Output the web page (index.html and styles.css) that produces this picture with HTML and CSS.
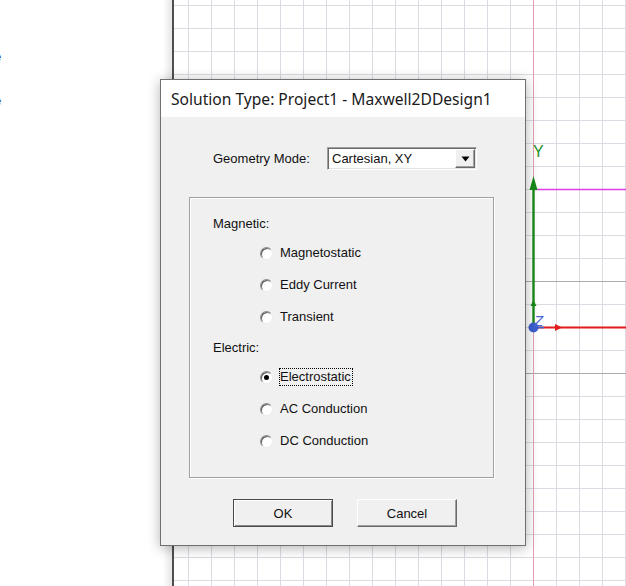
FILE: index.html
```html
<!DOCTYPE html>
<html lang="en">
<head>
<meta charset="utf-8">
<title>Solution Type</title>
<link rel="stylesheet" href="styles.css">
</head>
<body>
<div class="screen">
  <aside class="side">
    <div class="side-item">e</div>
    <div class="side-item">e</div>
  </aside>
  <main class="canvas">
    <svg class="axes" viewBox="174 0 452 586" width="452" height="586">
      <line x1="174" y1="281.5" x2="626" y2="281.5" stroke="#ababab" stroke-width="1"/>
      <line x1="174" y1="373.5" x2="626" y2="373.5" stroke="#ababab" stroke-width="1"/>
      <line x1="533.5" y1="0" x2="533.5" y2="586" stroke="#e4a0b2" stroke-width="1"/>
      <line x1="534" y1="189.5" x2="626" y2="189.5" stroke="#e03ce6" stroke-width="1.3"/>
      <line x1="533.5" y1="186" x2="533.5" y2="327" stroke="#178a17" stroke-width="2.4"/>
      <polygon points="533.5,176 529.5,190 537.5,190" fill="#178a17"/>
      <polygon points="533.5,300 530.5,306 536.5,306" fill="#178a17"/>
      <text x="533" y="157" class="axis-y">Y</text>
      <line x1="533" y1="327.5" x2="626" y2="327.5" stroke="#e31b1b" stroke-width="2.2"/>
      <polygon points="562,327.5 555,324 555,331" fill="#e31b1b"/>
      <line x1="533" y1="327.5" x2="544" y2="327.5" stroke="#3c5fd0" stroke-width="1.6"/>
      <circle cx="533.5" cy="327.5" r="5" fill="#3c5fd0"/>
      <text x="534" y="326" class="axis-z">Z</text>
    </svg>
  </main>

  <div class="dialog">
    <div class="titlebar">Solution Type: Project1 - Maxwell2DDesign1</div>
    <div class="dlg-body">
      <div class="geom-row">
        <span class="geom-label">Geometry Mode:</span>
        <div class="combo">
          <span class="combo-text">Cartesian, XY</span>
          <span class="combo-btn">
            <svg width="9" height="6" viewBox="0 0 9 6"><polygon points="0.5,0.5 8.5,0.5 4.5,5.5" fill="#000"/></svg>
          </span>
        </div>
      </div>

      <div class="group">
        <div class="group-head">Magnetic:</div>
        <div class="radio-row"><span class="radio"></span><span class="radio-label">Magnetostatic</span></div>
        <div class="radio-row"><span class="radio"></span><span class="radio-label">Eddy Current</span></div>
        <div class="radio-row"><span class="radio"></span><span class="radio-label">Transient</span></div>
        <div class="group-head">Electric:</div>
        <div class="radio-row"><span class="radio checked"></span><span class="radio-label focused">Electrostatic</span></div>
        <div class="radio-row"><span class="radio"></span><span class="radio-label">AC Conduction</span></div>
        <div class="radio-row"><span class="radio"></span><span class="radio-label">DC Conduction</span></div>
      </div>

      <div class="buttons">
        <button class="btn btn-default">OK</button>
        <button class="btn">Cancel</button>
      </div>
    </div>
  </div>
</div>
</body>
</html>
```

FILE: styles.css
```css
html, body {
  margin: 0;
  padding: 0;
  background: #fff;
}

.screen {
  position: relative;
  width: 626px;
  height: 586px;
  overflow: hidden;
  display: flex;
  background: #fff;
}

.side {
  width: 172px;
  flex: none;
  border-right: 2px solid #4f4f4f;
  background: linear-gradient(to right, #fff calc(100% - 9px), #e6e6e6);
  padding-top: 47px;
  box-sizing: content-box;
  display: flex;
  flex-direction: column;
  gap: 24px;
}

.side-item {
  height: 20px;
  line-height: 20px;
  margin-left: -6px;
  font-family: "Liberation Sans", Arial, sans-serif;
  font-size: 13px;
  color: #1c2a70;
}

.canvas {
  position: relative;
  flex: 1;
  background-color: #fff;
  background-image:
    linear-gradient(to right, #dbdbe3 1px, transparent 1px),
    linear-gradient(to bottom, #dbdbe3 1px, transparent 1px);
  background-size: 23px 23px;
  background-position: 14px 5px;
}

.axes {
  position: absolute;
  left: 0;
  top: 0;
  display: block;
}

.axis-y {
  font-family: "Liberation Sans", Arial, sans-serif;
  font-size: 16px;
  fill: #1f8f1f;
}

.axis-z {
  font-family: "Liberation Sans", Arial, sans-serif;
  font-size: 15px;
  font-style: italic;
  fill: #4a68d2;
}

/* Dialog */
.dialog {
  position: absolute;
  left: 160px;
  top: 79px;
  width: 364px;
  height: 465px;
  border: 1px solid #707070;
  background: #f0f0f0;
  box-shadow: 0 2px 12px rgba(0, 0, 0, 0.3);
  display: flex;
  flex-direction: column;
}

.titlebar {
  height: 37px;
  flex: none;
  background: #fff;
  padding-left: 10px;
  display: flex;
  align-items: center;
  font-family: "Noto Sans", sans-serif;
  font-size: 15.6px;
  color: #1a1a1a;
}

.dlg-body {
  display: flex;
  flex-direction: column;
  padding-top: 30px;
  font-family: "Liberation Sans", Arial, sans-serif;
  font-size: 13px;
  color: #111;
}

.geom-row {
  display: flex;
  align-items: center;
  height: 23px;
  padding-left: 52px;
}

.geom-label {
  width: 114px;
  flex: none;
}

.combo {
  width: 150px;
  height: 23px;
  box-sizing: border-box;
  border: 1px solid;
  border-color: #a0a0a0 #ffffff #ffffff #a0a0a0;
  box-shadow: inset 1px 1px 0 #696969, inset -1px -1px 0 #e3e3e3;
  background: #fff;
  display: flex;
  align-items: center;
}

.combo-text {
  flex: 1;
  padding-left: 4px;
}

.combo-btn {
  width: 20px;
  height: 19px;
  margin-right: 1px;
  box-sizing: border-box;
  background: #f0f0f0;
  border: 1px solid;
  border-color: #ffffff #696969 #696969 #ffffff;
  box-shadow: inset -1px -1px 0 #a0a0a0;
  display: flex;
  align-items: center;
  justify-content: center;
}

.combo-btn svg {
  display: block;
}

.group {
  margin: 27px 0 0 28px;
  width: 305px;
  height: 281px;
  box-sizing: border-box;
  border: 1px solid #a0a0a0;
  box-shadow: 1px 1px 0 #fff, inset 1px 1px 0 #fff;
  padding: 11px 0 0 23px;
  display: flex;
  flex-direction: column;
}

.group-head {
  height: 28px;
  display: flex;
  align-items: center;
}

.radio-row {
  height: 32px;
  display: flex;
  align-items: center;
  padding-left: 47px;
}

.radio {
  position: relative;
  width: 13px;
  height: 13px;
  flex: none;
  box-sizing: border-box;
  border-radius: 50%;
  background: #fff;
  border: 1px solid;
  border-color: #8c8c8c #ececec #ececec #8c8c8c;
  box-shadow: inset 1px 1px 0 #5a5a5a;
}

.radio.checked::after {
  content: "";
  position: absolute;
  left: 3px;
  top: 3px;
  width: 5px;
  height: 5px;
  border-radius: 50%;
  background: #000;
}

.radio-label {
  margin-left: 7px;
  line-height: 16px;
}

.radio-label.focused {
  outline: 1px dotted #000;
  padding-right: 1px;
}

.buttons {
  display: flex;
  gap: 24px;
  margin-top: 21px;
  padding-left: 72px;
}

.btn {
  width: 100px;
  height: 28px;
  box-sizing: border-box;
  padding: 0;
  font-family: "Liberation Sans", Arial, sans-serif;
  font-size: 13px;
  color: #111;
  background: #f0f0f0;
  border: 1px solid;
  border-color: #ffffff #696969 #696969 #ffffff;
  box-shadow: inset -1px -1px 0 #a0a0a0;
}

.btn-default {
  border-color: #4a4a4a;
  box-shadow: inset 1px 1px 0 #fff, inset -1px -1px 0 #8a8a8a;
}
```
